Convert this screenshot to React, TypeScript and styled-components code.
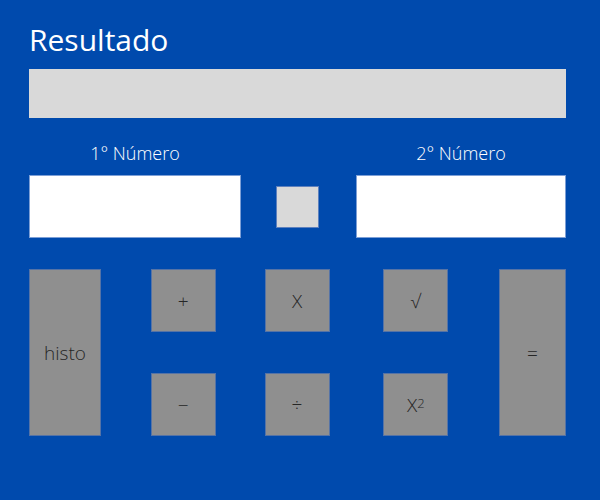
import React from 'react'
import styled, { createGlobalStyle } from 'styled-components'

const GlobalStyle = createGlobalStyle`
  html, body {
    margin: 0;
    padding: 0;
    background: #004aad;
  }
  body {
    font-family: 'Open Sans', 'Liberation Sans', sans-serif;
  }
`

const Calculator = styled.div`
  width: 600px;
  height: 500px;
  box-sizing: border-box;
  background: #004aad;
  padding: 20px 34px 0 29px;
`

const Title = styled.h1`
  margin: 0;
  font-size: 30px;
  line-height: 40px;
  font-weight: 400;
  color: #ffffff;
`

const ResultBar = styled.div`
  margin-top: 9px;
  height: 49px;
  background: #d9d9d9;
`

const InputsGrid = styled.div`
  margin-top: 23px;
  display: grid;
  grid-template-columns: 212px 1fr 210px;
  grid-template-rows: 24px 63px;
  row-gap: 10px;
`

const Label = styled.label`
  font-size: 18px;
  line-height: 24px;
  font-weight: 300;
  color: #ffffff;
  text-align: center;
`

const NumberInput = styled.input`
  box-sizing: border-box;
  width: 100%;
  height: 63px;
  margin: 0;
  border: 1px solid #7d9fd6;
  background: #ffffff;
  outline: none;
`

const Operator = styled.div`
  align-self: center;
  justify-self: center;
  box-sizing: border-box;
  width: 43px;
  height: 42px;
  margin-right: 2px;
  background: #d9d9d9;
  border: 1px solid #5d80bd;
`

const Keypad = styled.div`
  margin-top: 31px;
  display: grid;
  grid-template-columns: 72px 65px 65px 65px 67px;
  grid-template-rows: 63px 63px;
  justify-content: space-between;
  row-gap: 41px;
`

const Key = styled.button<{ tall?: boolean; shift?: number }>`
  box-sizing: border-box;
  margin: 0;
  padding: 0;
  background: #8f8f8f;
  border: 1px solid #5573a6;
  color: #262626;
  font-family: 'Open Sans', 'Liberation Sans', sans-serif;
  font-size: 19px;
  font-weight: 300;
  display: flex;
  align-items: center;
  justify-content: center;
  ${({ tall }) => tall && `
    grid-row: span 2;
  `}
  ${({ shift }) => shift && `
    margin-left: ${shift}px;
    margin-right: ${-shift}px;
  `}
`

const Sup = styled.sup`
  font-size: 13px;
  line-height: 0;
  position: relative;
  top: -2px;
`

export default function App() {
  return (
    <>
      <GlobalStyle />
      <Calculator>
        <Title>Resultado</Title>
        <ResultBar />
        <InputsGrid>
          <Label>1° Número</Label>
          <span />
          <Label>2° Número</Label>
          <NumberInput type="text" />
          <Operator />
          <NumberInput type="text" />
        </InputsGrid>
        <Keypad>
          <Key tall>histo</Key>
          <Key shift={-1}>+</Key>
          <Key shift={-3}>X</Key>
          <Key>√</Key>
          <Key tall>=</Key>
          <Key shift={-1}>−</Key>
          <Key shift={-3}>÷</Key>
          <Key>X<Sup>2</Sup></Key>
        </Keypad>
      </Calculator>
    </>
  )
}
